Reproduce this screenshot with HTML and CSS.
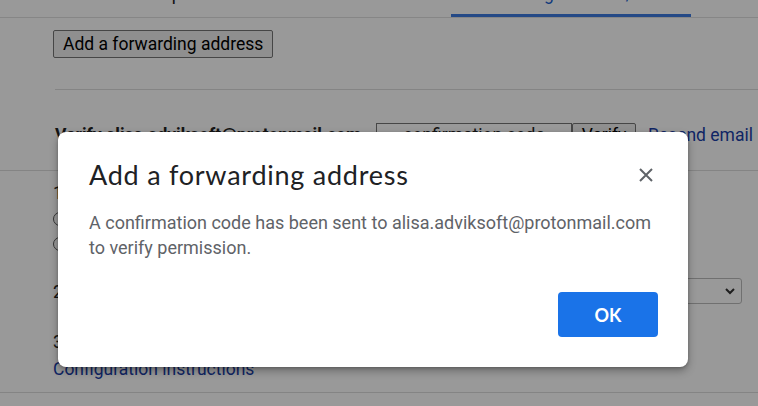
FILE: index.html
```html
<!DOCTYPE html>
<html>
<head>
<meta charset="utf-8">
<link rel="stylesheet" href="styles.css">
</head>
<body>
<div class="page">
  <div class="tabs">
    <div class="tab first"><span class="tab-label">Accounts and Import</span></div>
    <div class="tab second"><span class="tab-label">Filters and Blocked</span></div>
    <div class="tab active"><span class="tab-label">Forwarding and POP/IMAP</span></div>
  </div>
  <div class="section">
    <button class="btn">Add a forwarding address</button>
    <div class="rule"></div>
    <div class="verify-row">
      <span class="verify-label">Verify alisa.adviksoft@protonmail.com</span>
      <input class="code" placeholder="confirmation code">
      <button class="btn small">Verify</button>
      <a class="link">Resend email</a>
    </div>
  </div>
  <div class="full-rule"></div>
  <div class="pop">
    <div class="step">1. Status: POP is disabled</div>
    <label class="radio"><span class="dot"></span>Enable POP for all mail</label>
    <label class="radio"><span class="dot"></span>Enable POP for mail that arrives from now on</label>
    <div class="step two">2. When messages are accessed with POP
      <span class="select"><svg width="14" height="14" viewBox="0 0 14 14"><path d="M3 5l4 4 4-4" fill="none" stroke="#333" stroke-width="2"/></svg></span>
    </div>
    <div class="step three">3. Configure your email client</div>
    <a class="link">Configuration instructions</a>
  </div>
  <div class="full-rule bottom"></div>
</div>
<div class="overlay"></div>
<div class="dialog">
  <div class="dialog-head">
    <h2 class="title">Add a forwarding address</h2>
    <svg class="close" width="16" height="16" viewBox="0 0 16 16"><path d="M2 2L14 14M14 2L2 14" stroke="#5f6368" stroke-width="2"/></svg>
  </div>
  <p class="msg">A confirmation code has been sent to alisa.adviksoft@protonmail.com to verify permission.</p>
  <div class="actions"><button class="ok">OK</button></div>
</div>
</body>
</html>
```

FILE: styles.css
```css
html, body { margin: 0; padding: 0; }
body {
  width: 758px; height: 406px; overflow: hidden;
  background: #fff;
  font-family: Roboto, "Liberation Sans", sans-serif;
  color: #222;
  position: relative;
}
.page { font-size: 17.5px; }
.tabs {
  height: 17px;
  border-bottom: 1px solid #e0e0e0;
  display: flex;
  overflow: hidden;
}
.tab {
  height: 17px; box-sizing: border-box; flex: none;
  overflow: hidden; text-align: center; white-space: nowrap;
}
.tab-label { display: block; margin-top: -16px; line-height: 20px; }
.tab.first { width: 220px; padding-left: 40px; text-align: left; }
.tab.second { width: 231px; }
.tab.active { width: 240px; color: #1a5fd0; border-bottom: 3px solid #3d7be0; }
.section { padding: 12px 0 0 53px; }
.btn {
  font: 17.5px Roboto, "Liberation Sans", sans-serif;
  color: #000;
  background: #efefef;
  border: 1px solid #767676;
  border-radius: 2px;
  height: 28px;
  padding: 0 9px;
}
.rule { height: 1px; background: #ddd; margin: 31px 0 0 2px; }
.verify-row { display: flex; align-items: center; height: 26px; margin-top: 32px; }
.verify-label { font-weight: bold; width: 321px; padding-left: 2px; white-space: nowrap; overflow: hidden; }
.code {
  width: 190px; height: 22px; border: 1px solid #767676; padding: 0 2px;
  font: 17.5px Roboto, sans-serif;
}
.code::placeholder { color: #222; text-align: center; }
.btn.small { height: 24px; padding: 0 8px; width: 64px; }
.link { color: #1a3ea8; margin-left: 12px; white-space: nowrap; }
.full-rule { height: 1px; background: #ddd; margin-top: 22px; }
.pop { padding: 9px 0 0 53px; }
.step { height: 26px; line-height: 26px; }
.radio { display: flex; align-items: center; height: 25px; }
.dot { width: 12px; height: 12px; border: 1px solid #555; border-radius: 50%; margin-right: 8px; }
.step.two { margin-top: 23px; display: flex; justify-content: space-between; padding-right: 16px; }
.select { width: 52px; height: 24px; border: 1px solid #bbb; border-radius: 3px; display: flex; align-items: center; justify-content: flex-end; padding-right: 4px; margin-top: -1px; }
.step.three { margin-top: 24px; }
.pop .link { margin-left: 0; display: block; line-height: 20px; margin-top: 4px; }
.full-rule.bottom { margin-top: 13px; }

.overlay { position: absolute; inset: 0; background: rgba(0,0,0,0.4); }
.dialog {
  position: absolute; left: 58px; top: 132px;
  width: 630px; height: 235px; box-sizing: border-box;
  background: #fff; border-radius: 8px;
  box-shadow: 0 4px 8px rgba(0,0,0,0.3), 0 1px 3px rgba(0,0,0,0.2);
  padding: 26px 30px 30px 31px;
}
.dialog-head { display: flex; justify-content: space-between; align-items: center; }
.title {
  margin: 0; font-family: Lato, "Open Sans", sans-serif; font-weight: 400;
  font-size: 27px; letter-spacing: 0.75px; color: #202124; line-height: 34px;
}
.close { margin-right: 4px; }
.msg {
  margin: 18px 0 0; font-size: 18px; line-height: 25px; color: #5f6368; width: 580px;
}
.actions { display: flex; justify-content: flex-end; margin-top: 32px; }
.ok {
  width: 100px; height: 45px; border: 0; border-radius: 4px;
  background: #1a73e8; color: #fff;
  font: bold 18px Lato, "Open Sans", sans-serif;
}
```
